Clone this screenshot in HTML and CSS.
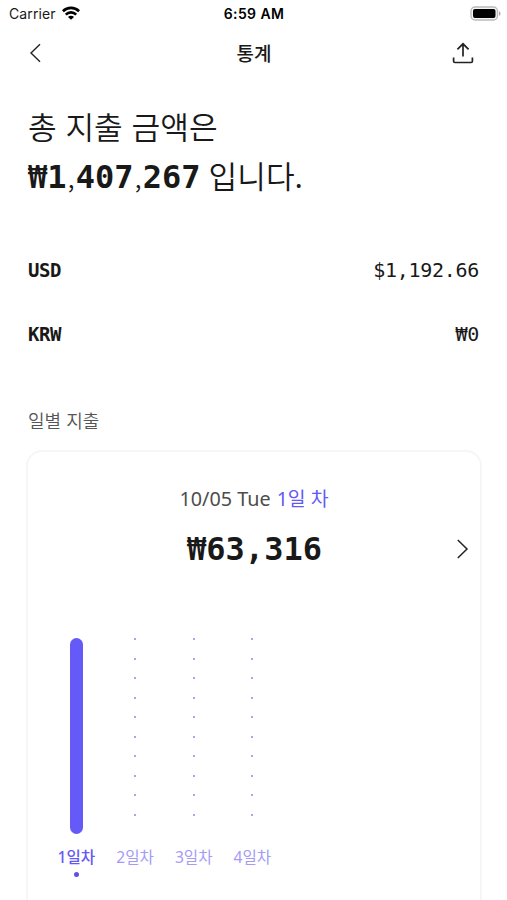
FILE: index.html
```html
<!DOCTYPE html>
<html lang="ko">
<head>
<meta charset="utf-8">
<meta name="viewport" content="width=device-width">
<title>통계</title>
<link rel="stylesheet" href="styles.css">
</head>
<body>
<div class="screen">
  <div class="status">
    <div class="carrier"><span>Carrier</span>
      <svg class="wifi" width="18" height="14" viewBox="0 0 18 14" fill="none" stroke="#000" stroke-width="2.7"><path d="M.9 5.2a11.5 11.5 0 0 1 16.2 0"/><path d="M3.8 8.6a7.4 7.4 0 0 1 10.4 0"/><path d="M9 13.8 6 11a4.2 4.2 0 0 1 6 0z" fill="#000" stroke="none"/></svg>
    </div>
    <span class="clock">6:59 AM</span>
    <svg class="battery" width="31" height="15" viewBox="0 0 31 15"><rect x="1" y="1" width="26.5" height="13" rx="4" fill="#f4f4f4" stroke="#bbb" stroke-width="1.4"/><rect x="3" y="3" width="22.5" height="9" rx="2" fill="#000"/><path d="M29 5.2c2 .8 2 3.8 0 4.6z" fill="#aaa"/></svg>
  </div>
  <header class="nav">
    <svg class="back" width="12" height="20" viewBox="0 0 12 20" fill="none" stroke="#222" stroke-width="1.4"><path d="M11 1.3 2 10l9 8.7"/></svg>
    <h1>통계</h1>
    <svg class="share" width="22" height="22" viewBox="0 0 22 22" fill="none" stroke="#222" stroke-width="1.7"><path d="M11 14.5V2M5.4 7.4 11 1.8l5.6 5.6M1.6 15.5v3.7q0 1.3 1.3 1.3h16.2q1.3 0 1.3-1.3v-3.7"/></svg>
  </header>
  <main>
    <section class="total">
      <p>총 지출 금액은</p>
      <p><b>₩1</b><span class="comma">,</span><b>407</b><span class="comma">,</span><b>267</b><span class="tail">입니다.</span></p>
    </section>
    <section class="currencies">
      <div class="row"><b>USD</b><span>$1,192.66</span></div>
      <div class="row"><b>KRW</b><span>₩0</span></div>
    </section>
    <h2>일별 지출</h2>
    <section class="card">
      <p class="date">10/05 Tue <span>1일 차</span></p>
      <div class="amount"><b>₩63,316</b>
        <svg class="next" width="12" height="20" viewBox="0 0 12 20" fill="none" stroke="#222" stroke-width="1.5"><path d="M.8 1 10 10l-9.2 9"/></svg>
      </div>
      <div class="chart">
        <div class="day active"><div class="bar"></div><span>1일차</span><i></i></div>
        <div class="day"><div class="dots"></div><span>2일차</span></div>
        <div class="day"><div class="dots"></div><span>3일차</span></div>
        <div class="day"><div class="dots"></div><span>4일차</span></div>
      </div>
    </section>
  </main>
</div>
</body>
</html>
```
FILE: styles.css
```css
* { box-sizing: border-box; }
body, h1, h2, p { margin: 0; }
body { background: #fff; color: #191919; font-family: "Noto Sans CJK KR", sans-serif; }
.screen { height: 900px; overflow: hidden; }
.status { height: 28px; display: grid; grid-template-columns: 1fr auto 1fr; align-items: center; padding: 0 6px 0 9px; font: 14px/28px Inter, sans-serif; }
.carrier { display: flex; align-items: center; gap: 6px; letter-spacing: .1px; }
.wifi { margin-top: -3px; }
.clock { font-weight: 600; color: #000; letter-spacing: .4px; margin-right: 2px; }
.battery { justify-self: end; margin-top: -1px; }
.nav { height: 50px; display: grid; grid-template-columns: 1fr auto 1fr; align-items: center; padding: 0 33px 0 29px; }
h1 { font-size: 19px; line-height: 50px; font-weight: 500; margin-left: 5px; }
.share { justify-self: end; }
.total { padding: 23px 28px 0; font-size: 31.2px; font-weight: 350; }
.total p { height: 49px; line-height: 49px; display: flex; }
.total p + p { height: 51px; }
.total b, .amount b { font: 700 32px/51px "DejaVu Sans Mono", monospace; }
.total b { line-height: 54px; }
.comma { width: 9.2px; text-align: center; font-size: 25px; line-height: 57px; }
.tail { margin-left: 8px; }
.currencies { padding: 37px 28px 0; }
.row { display: flex; justify-content: space-between; height: 64px; line-height: 64px; font-family: "DejaVu Sans Mono", monospace; }
.row b { font-size: 19px; letter-spacing: -.4px; }
.row span { font-size: 20px; letter-spacing: -.3px; }
h2 { margin: 37px 28px 0; font-size: 18px; line-height: 34px; font-weight: 350; color: #555; }
.card { margin: 13px 25px 0 26px; height: 500px; border: 2px solid #f6f6f6; border-radius: 16px; padding-top: 30px; }
.date { text-align: center; font-size: 19.8px; line-height: 34px; color: #4d4d4d; font-family: "Noto Sans", "Noto Sans CJK KR", sans-serif; }
.date span { color: #6558f5; font-size: 19.4px; margin-left: 1px; }
.amount { display: grid; grid-template-columns: 1fr auto 1fr; height: 64px; align-items: center; padding: 0 11px 0 12px; margin-top: 1px; }
.amount b { grid-column: 2; }
.next { justify-self: end; }
.chart { display: flex; margin: 57px 0 0 19px; }
.day { width: 58.7px; display: flex; flex-direction: column; align-items: center; color: #a49bf8; font-family: "Noto Sans", "Noto Sans CJK KR", sans-serif; font-size: 15.6px; font-weight: 400; }
.bar { width: 13px; height: 196px; border-radius: 7px; background: #655af8; }
.dots { width: 2px; height: 185px; margin-bottom: 11px; background: repeating-linear-gradient(to bottom, #aaa4ea 0 2px, transparent 2px 19.55px); }
.day span { line-height: 24px; margin-top: 11px; }
.active { color: #6558f5; font-weight: 500; }
.day i { width: 5px; height: 5px; border-radius: 50%; background: #6050e6; margin-top: 3px; }
```
